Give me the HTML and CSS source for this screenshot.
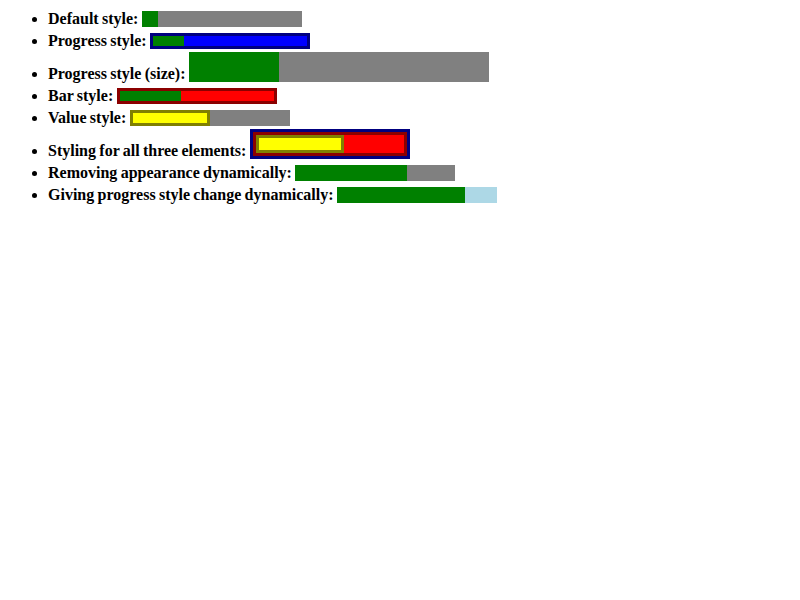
FILE: index.html
```html
<!DOCTYPE html>
<html lang="en">
  <head>
    <meta charset="UTF-8">
    <title>Progress styling</title>
    <link rel="stylesheet" href="styles.css">
  </head>
  <body>
    <ul class="tests">
      <li>Default style: <span class="progress"><span class="value" style="width: 10%"></span></span></li>
      <li>Progress style: <span class="progress progress-styled"><span class="value" style="width: 20%"></span></span></li>
      <li>Progress style (size): <span class="progress progress-size"><span class="value" style="width: 30%"></span></span></li>
      <li>Bar style: <span class="progress bar-styled"><span class="value" style="width: 40%"></span></span></li>
      <li>Value style: <span class="progress"><span class="value value-styled" style="width: 50%"></span></span></li>
      <li>Styling for all three elements: <span class="progress all-three"><span class="bar"><span class="value value-styled" style="width: 60%"></span></span></span></li>
      <li>Removing appearance dynamically: <span class="progress"><span class="value" style="width: 70%"></span></span></li>
      <li>Giving progress style change dynamically: <span class="progress progress-light"><span class="value" style="width: 80%"></span></span></li>
    </ul>
  </body>
</html>
```

FILE: styles.css
```css
body {
  margin: 8px;
  background: #fff;
  color: #000;
  font: bold 16px "Liberation Serif", serif;
}
.tests {
  margin: 0;
  padding-left: 40px;
  line-height: 22px;
  word-spacing: -0.7px;
}
.progress {
  display: inline-block;
  vertical-align: -0.2em;
  box-sizing: border-box;
  width: 160px;
  height: 16px;
  background: gray;
}
.value {
  display: block;
  box-sizing: border-box;
  height: 100%;
  background: green;
}
.progress-styled { border: 3px solid navy; background: blue; }
.progress-size { width: 300px; height: 30px; }
.bar-styled { border: 3px solid darkred; background: red; }
.value-styled { border: 3px solid olive; background: yellow; }
.all-three { height: 30px; border: 3px solid navy; }
.all-three .bar {
  display: block;
  box-sizing: border-box;
  height: 100%;
  border: 3px solid darkred;
  background: red;
}
.progress-light { background: lightblue; }
```
